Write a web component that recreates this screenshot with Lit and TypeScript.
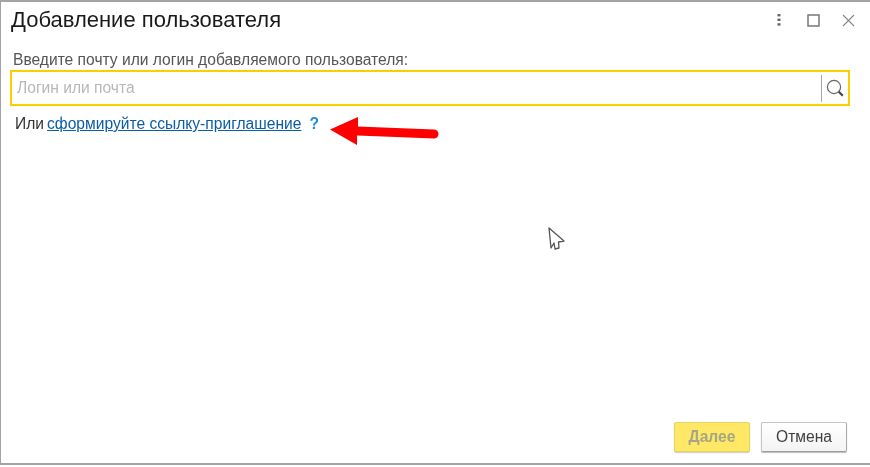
import { LitElement, html, css } from "lit";
import { customElement } from "lit/decorators.js";

@customElement("app-root")
export class AppRoot extends LitElement {
  static styles = css`
    :host { display: block; width: 870px; height: 467px; position: relative; overflow: hidden; background: #fff; font-family: "Liberation Sans", Arial, sans-serif; }
    .win { box-sizing: border-box; width: 870px; height: 465px; border: 1px solid #a3a3a3; border-top-width: 2px; border-bottom-width: 2px; border-right-width: 0; display: flex; flex-direction: column; padding: 0 20px 0 9px; color: #333; filter: blur(0.4px); }
    .head { display: flex; align-items: center; height: 36px; flex: none; }
    .title { flex: 1; font-size: 22px; color: #1a1a1a; padding-left: 1px; }
    .ctl { display: flex; align-items: center; margin-right: -5px; }
    .ctl svg { display: block; }
    .ctl svg + svg { margin-left: 25px; }
    .ctl svg + svg + svg { margin-left: 22px; }
    .label { font-size: 15.6px; color: #555; margin: 13px 0 0 3px; line-height: 18px; height: 18px; }
    .input { box-sizing: border-box; height: 36px; margin-top: 1px; border: 2px solid #fc0; display: flex; align-items: center; }
    .ph { flex: 1; font-size: 15.6px; color: #b8b8b8; padding-left: 5px; }
    .sep { width: 1px; height: 27px; background: #a8a8a8; }
    .search { width: 26px; display: flex; justify-content: center; }
    .or { font-size: 15.6px; line-height: 18px; color: #333; margin: 9px 0 0 5px; display: flex; }
    .or a { color: #0b5da8; text-decoration: underline; margin-left: 3px; }
    .or .q { color: #1b8fd0; font-weight: 700; margin-left: 8px; }
    .space { flex: 1; }
    .foot { display: flex; justify-content: flex-end; gap: 11px; margin-bottom: 11px; margin-right: 3px; }
    .btn { box-sizing: border-box; height: 30px; font-size: 15.6px; display: flex; align-items: center; justify-content: center; border-radius: 2px; }
    .next { width: 76px; background: #ffe866; border: 1px solid #e6d45e; color: #a8a585; font-weight: 700; box-shadow: 0 1px 1px #ccc; }
    .cancel { width: 86px; background: linear-gradient(#fff, #f3f3f3); border: 1px solid #c4c4c4; border-bottom-color: #9c9c9c; border-right-color: #aaa; color: #404040; box-shadow: 0 1px 1px #bbb; }
    .arrow { position: absolute; left: 329px; top: 116px; }
    .cursor { position: absolute; left: 548px; top: 227px; }
  `;

  render() {
    return html`
      <div class="win">
        <div class="head">
          <div class="title">Добавление пользователя</div>
          <div class="ctl">
            <svg width="6" height="14" viewBox="0 0 6 14"><g fill="#666"><rect x="1.5" y="1" width="3" height="2.4"/><rect x="1.5" y="5.6" width="3" height="2.4"/><rect x="1.5" y="10.2" width="3" height="2.4"/></g></svg>
            <svg width="13" height="13" viewBox="0 0 13 13"><rect x="1" y="1" width="11" height="11" fill="none" stroke="#777" stroke-width="1.5"/></svg>
            <svg width="13" height="13" viewBox="0 0 13 13"><path d="M1 1l11 11M12 1L1 12" stroke="#888" stroke-width="1.1" fill="none"/></svg>
          </div>
        </div>
        <div class="label">Введите почту или логин добавляемого пользователя:</div>
        <div class="input">
          <div class="ph">Логин или почта</div>
          <div class="sep"></div>
          <div class="search">
            <svg width="22" height="22" viewBox="0 0 22 22"><circle cx="10" cy="10" r="6.6" fill="none" stroke="#666" stroke-width="1.2"/><path d="M14.8 14.8l4 4" stroke="#444" stroke-width="2.2"/></svg>
          </div>
        </div>
        <div class="or">Или <a>сформируйте ссылку-приглашение</a><span class="q">?</span></div>
        <div class="space"></div>
        <div class="foot">
          <div class="btn next">Далее</div>
          <div class="btn cancel">Отмена</div>
        </div>
      </div>
      <svg class="arrow" width="112" height="30" viewBox="0 0 112 30"><path d="M1 13.5L29 1V10.5L105 13.5A4.5 4.5 0 0 1 105 22.5L28 19.5V29Z" fill="#fe0000"/></svg>
      <svg class="cursor" width="18" height="24" viewBox="0 0 18 24"><path d="M1 1L16 14L10.5 15L11 21L7 22L6 16L3 21Z" fill="#fff" stroke="#555" stroke-width="1.3" stroke-linejoin="round"/></svg>
    `;
  }
}
